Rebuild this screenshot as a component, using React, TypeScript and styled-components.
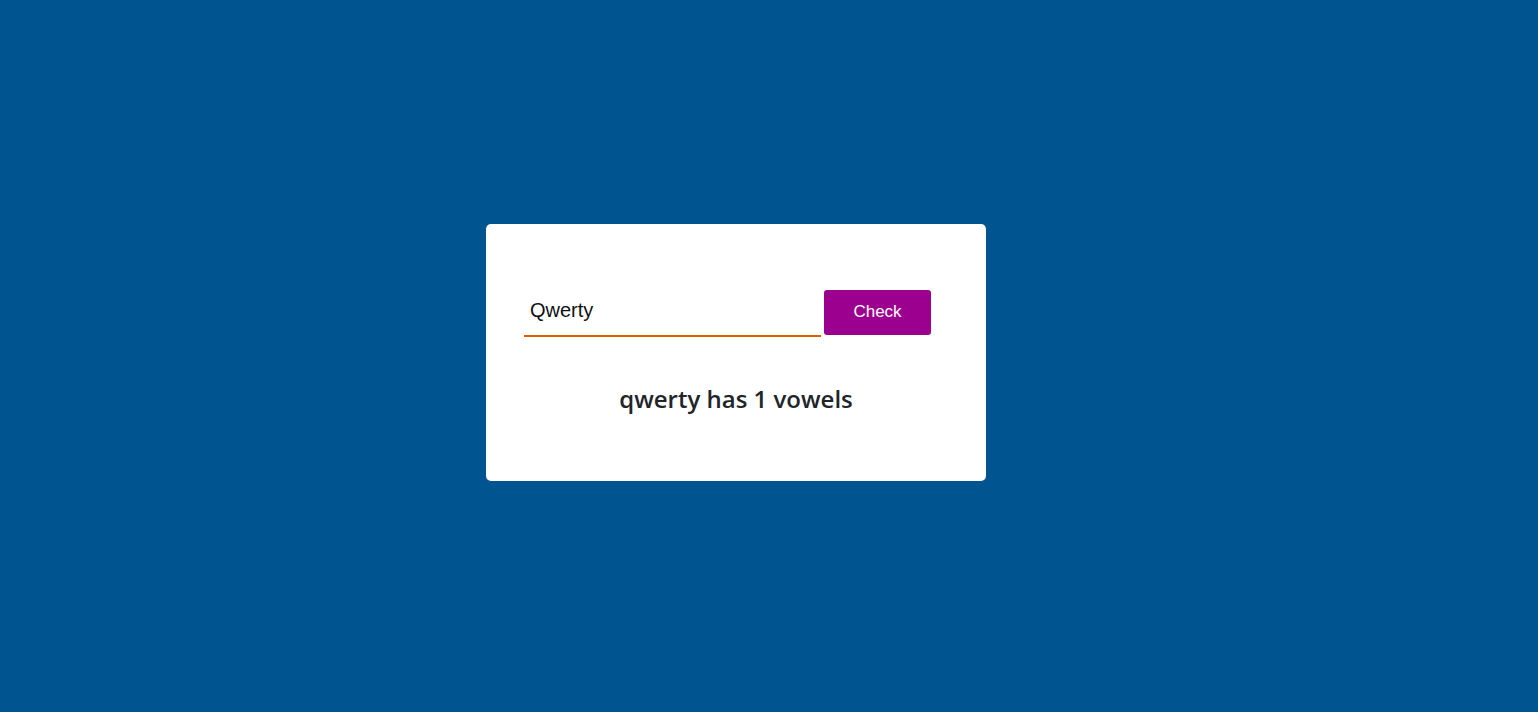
import React, { useState } from "react";
import styled, { createGlobalStyle } from "styled-components";

const Global = createGlobalStyle`
  html, body { margin: 0; padding: 0; }
  body { background: #00548f; font-family: "Open Sans", sans-serif; }
`;

const Page = styled.div`
  height: 712px;
  display: flex;
  align-items: center;
  justify-content: center;
  padding-right: 66px;
  box-sizing: border-box;
`;

const Card = styled.div`
  width: 500px;
  height: 257px;
  box-sizing: border-box;
  background: #fff;
  border-radius: 5px;
  padding: 66px 55px 0 38px;
  display: flex;
  flex-direction: column;
  margin-top: -7px;
`;

const Row = styled.div`
  display: flex;
  align-items: flex-start;
  gap: 3px;
`;

const Input = styled.input`
  width: 297px;
  height: 47px;
  box-sizing: border-box;
  border: none;
  border-bottom: 2px solid #d95f00;
  outline: none;
  padding: 0 6px 4px;
  font-family: "Liberation Sans", Arial, sans-serif;
  font-size: 20px;
  color: #111;
  background: transparent;
`;

const Button = styled.button`
  width: 107px;
  height: 45px;
  border: none;
  border-radius: 3px;
  background: #9c008f;
  color: #fff;
  font-family: "Liberation Sans", Arial, sans-serif;
  font-size: 17px;
  padding: 0 0 2px;
  cursor: pointer;
`;

const Result = styled.p`
  margin: 45px -55px 0 -38px;
  text-align: center;
  font-family: "Open Sans", sans-serif;
  font-size: 24px;
  font-weight: 600;
  color: #212529;
`;

export default function App() {
  const [value, setValue] = useState("Qwerty");
  return (
    <>
      <Global />
      <Page>
        <Card>
          <Row>
            <Input value={value} onChange={(e) => setValue(e.target.value)} />
            <Button>Check</Button>
          </Row>
          <Result>qwerty has 1 vowels</Result>
        </Card>
      </Page>
    </>
  );
}
